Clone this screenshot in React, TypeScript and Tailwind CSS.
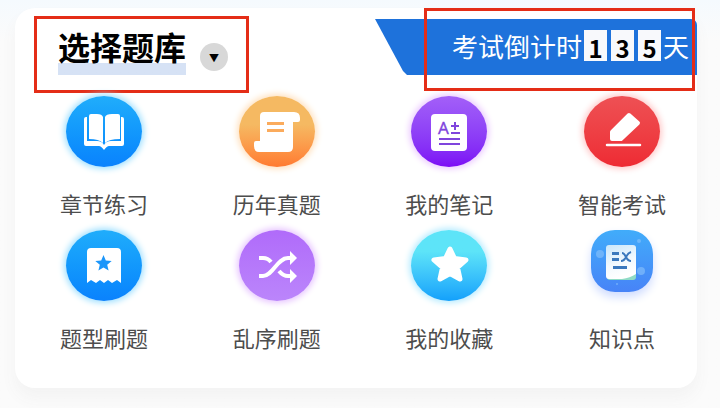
import type { ReactNode } from 'react';

type Item = {
  label: string;
  tone: string;
  icon: ReactNode;
};

const CIRCLE = 'h-[71px] w-[76px]';

const BookIcon = () => (
  <svg viewBox="0 0 76 71" className="h-full w-full" fill="#fff">
    <path d="M23 20q0-2 2-2h6q5 0 6 3v26q-4-4-14-4z" />
    <path d="M54 20q0-2-2-2h-6q-6 0-7 3v26q4-4 15-4z" />
    <path d="M21 21h-1q-2 0-2 2v25q0 2 2 2h13q2 0 5 4 3-4 5-4h13q2 0 2-2V23q0-2-2-2h-1v24H45q-5 0-7 4-2-4-7-4H21z" />
  </svg>
);

const ScrollIcon = () => (
  <svg viewBox="0 0 76 71" className="h-full w-full">
    <path
      fill="#fff"
      d="M25 16h30q6 0 6 6v2q0 2-2 2h-5v25q0 5-5 5H20q-5 0-5-6v-3q0-2 2-2h4V20q0-4 4-4z"
    />
    <path stroke="#fbab5c" strokeWidth="3" d="M28 27.500h17M28 34.500h17" />
  </svg>
);

const NoteIcon = () => (
  <svg viewBox="0 0 76 71" className="h-full w-full">
    <rect x="20" y="18" width="36" height="37" rx="4" fill="#fff" />
    <text x="27" y="38" fontSize="17" fill="#7f45dd" stroke="#7f45dd" strokeWidth="0.300" fontFamily="Noto Sans, sans-serif">
      A
    </text>
    <path stroke="#7f45dd" strokeWidth="2" d="M40 30h8M44 26v8M40 37h9M28 43h21M28 48h21" />
  </svg>
);

const PencilIcon = () => (
  <svg viewBox="0 0 76 71" className="h-full w-full" fill="#fff" stroke="#fff" strokeLinejoin="round" strokeLinecap="round">
    <path strokeWidth="4" d="M45 19l9 8-17 16h-9v-7z" />
    <path strokeWidth="2.500" d="M23 49h33" />
  </svg>
);

const TicketIcon = () => (
  <svg viewBox="0 0 76 71" className="h-full w-full">
    <path
      fill="#fff"
      d="M25 18h26q4 0 4 4v31l-4-3-5 3-4-3-4 3-4-3-4 3-5-3-4 3V22q0-4 4-4z"
    />
    <path
      fill="#1c96fa"
      d="M37.500 25l2.300 5.400 5.900.5-4.500 3.800 1.400 5.800-5.100-3.100-5.100 3.100 1.400-5.800-4.500-3.800 5.900-.5z"
    />
  </svg>
);

const ShuffleIcon = () => (
  <svg viewBox="0 0 76 71" className="h-full w-full">
    <g fill="none" stroke="#fff" strokeWidth="4">
      <path d="M20 46h4c10 0 14-18 25-18h4" />
      <path d="M20 28h4q5 0 8 4M40 41q4 5 9 5h4" />
    </g>
    <path fill="#fff" d="M51 21l7 7-7 7zM51 39l7 7-7 7z" />
  </svg>
);

const StarIcon = () => (
  <svg viewBox="0 0 76 71" className="h-full w-full">
    <path
      fill="#fff"
      stroke="#fff"
      strokeWidth="5"
      strokeLinejoin="round"
      d="M39 19l4.500 9.500 11.500 1.500-8.500 7.500 2.500 11.500-10-5.500-10 5.500 2.500-11.500-8.500-7.500 11.500-1.500z"
    />
  </svg>
);

const KnowledgeIcon = () => (
  <svg viewBox="0 0 62 62" className="h-full w-full">
    <defs>
      <linearGradient id="paper" x1="0" y1="0" x2="0.3" y2="1">
        <stop offset="0" stopColor="#c9e6fb" />
        <stop offset="0.6" stopColor="#f2f9fe" />
        <stop offset="1" stopColor="#ffffff" />
      </linearGradient>
    </defs>
    <g fill="#8cc4fc" opacity="0.6">
      <circle cx="9" cy="24" r="4" />
      <circle cx="50" cy="41" r="4" />
      <circle cx="48" cy="11" r="2" />
      <circle cx="26" cy="54" r="1" />
    </g>
    <rect x="16" y="16" width="29" height="34" rx="3" fill="#8fdbc6" />
    <path fill="url(#paper)" d="M18 15h24q3 0 3 3v26q-6 4-14 5H18q-3 0-3-3V18q0-3 3-3z" />
    <path
      fill="none"
      stroke="#3a78bd"
      strokeWidth="3"
      d="M21 23.500h7M21 29.500h7M22 37.500h14"
    />
    <path fill="none" stroke="#3a78bd" strokeWidth="2" d="M31 23q2 0 4 4t5 4M40 22q-3 1-5 5t-5 4" />
  </svg>
);

const rows: Item[][] = [
  [
    {
      label: '章节练习',
      tone: 'bg-linear-to-b from-[#20adfb] to-[#0b82fd] shadow-[0_0_6px_2px_#9fe0ff]',
      icon: <BookIcon />,
    },
    {
      label: '历年真题',
      tone: 'bg-linear-to-b from-[#f5b962] from-40% to-[#ff7a30] shadow-[0_0_6px_2px_#ffe0bd]',
      icon: <ScrollIcon />,
    },
    {
      label: '我的笔记',
      tone: 'bg-linear-to-b from-[#a35ff8] to-[#7d08f5] shadow-[0_0_6px_2px_#ebc9ff]',
      icon: <NoteIcon />,
    },
    {
      label: '智能考试',
      tone: 'bg-linear-to-b from-[#ee5054] to-[#ee2a33] shadow-[0_0_6px_2px_#ffc9c9]',
      icon: <PencilIcon />,
    },
  ],
  [
    {
      label: '题型刷题',
      tone: 'bg-linear-to-b from-[#20adfb] to-[#0b82fd] shadow-[0_0_6px_2px_#9fe0ff]',
      icon: <TicketIcon />,
    },
    {
      label: '乱序刷题',
      tone: 'bg-linear-to-b from-[#b06bfa] to-[#bb85fb] shadow-[0_0_6px_2px_#e7c4ff]',
      icon: <ShuffleIcon />,
    },
    {
      label: '我的收藏',
      tone: 'bg-linear-to-b from-[#5de4f8] from-30% to-[#12a0fb] shadow-[0_0_6px_2px_#b5ebff]',
      icon: <StarIcon />,
    },
    { label: '知识点', tone: '', icon: <KnowledgeIcon /> },
  ],
];

function MenuItem({ label, tone, icon }: Item) {
  return (
    <a href="#" className="flex w-[88px] flex-col items-center">
      <span className={`flex justify-center ${CIRCLE}`}>
        {tone ? (
          <span className={`h-full w-full rounded-[50%] ${tone}`}>{icon}</span>
        ) : (
          <span className="size-[62px] rounded-3xl bg-linear-to-b from-[#41acfa] to-[#4783f7] shadow-[0_5px_10px_#cfdcff]">
            {icon}
          </span>
        )}
      </span>
      <span className="mt-5 text-[22px] leading-8 whitespace-nowrap text-[#4d4d4d]">{label}</span>
    </a>
  );
}

function Countdown({ days }: { days: string }) {
  return (
    <div className="relative mt-[11px] w-[322px]">
      <div className="flex h-14 items-start justify-end rounded-tr-md bg-[#1e72db] pt-[11px] pr-2 text-[26px] leading-8 text-white [clip-path:polygon(0_0,100%_0,100%_100%,32px_100%,28px_52px)]">
        <span>考试倒计时</span>
        <span className="mx-[2px] flex gap-1">
          {days.split('').map((digit, i) => (
            <span
              key={i}
              className="flex h-[31px] w-[23px] items-center justify-center bg-[#f8f9fc] pt-1 text-2xl font-bold text-black"
            >
              {digit}
            </span>
          ))}
        </span>
        <span>天</span>
      </div>
      <div className="absolute -top-[11px] right-[2px] h-[83px] w-[271px] border-3 border-[#e42d17]" />
    </div>
  );
}

export default function App() {
  return (
    <div className="min-h-screen bg-linear-to-b from-[#f5fafe] to-[#fbfbfb] to-10% pt-2 pr-[23px] pb-5 pl-[15px] font-['Noto_Sans_CJK_SC',sans-serif]">
      <main className="rounded-[20px] bg-white pb-[35px] shadow-[0_10px_16px_#f3f3f3]">
        <header className="flex h-[88px] items-start justify-between pl-[19px]">
          <div className="mt-2 flex h-[77px] w-[215px] border-3 border-[#e42d17] pl-[21px]">
            <h1 className="mt-[7px] h-[49px] bg-linear-to-b from-transparent from-76% to-[#d6e2f5] to-76% text-[32px] leading-10 font-bold whitespace-nowrap text-black">
              选择题库
            </h1>
            <button
              type="button"
              aria-label="选择题库"
              className="mt-6 ml-[14px] flex size-7 items-center justify-center rounded-full bg-[#d8d8d8] text-[10px] text-black"
            >
              ▼
            </button>
          </div>
          <Countdown days="135" />
        </header>
        <nav className="flex flex-col gap-[11px] pr-[31px] pl-[45px]">
          {rows.map((row, i) => (
            <div key={i} className="flex justify-between">
              {row.map((item) => (
                <MenuItem key={item.label} {...item} />
              ))}
            </div>
          ))}
        </nav>
      </main>
    </div>
  );
}
